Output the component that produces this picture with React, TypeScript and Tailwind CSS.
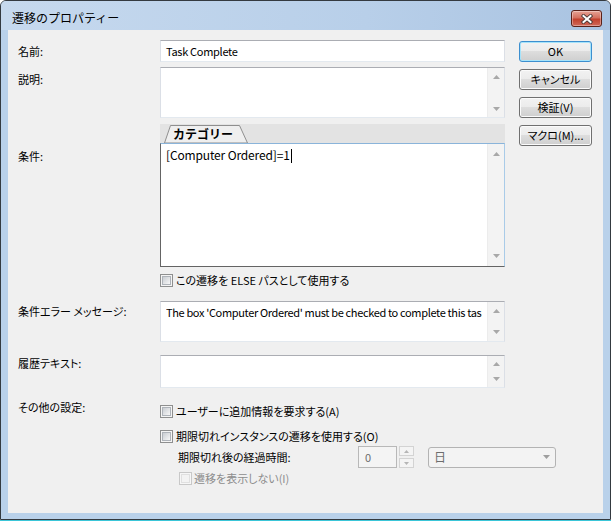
import React from 'react'

const Arrow = ({ down = false, color = '#a8a8a8', w = 7 }: { down?: boolean; color?: string; w?: number }) => (
  <svg width={w} height={Math.ceil(w / 2)} viewBox={`0 0 ${w} ${Math.ceil(w / 2)}`}>
    <polygon
      points={down ? `0,0 ${w},0 ${w / 2},${Math.ceil(w / 2)}` : `0,${Math.ceil(w / 2)} ${w},${Math.ceil(w / 2)} ${w / 2},0`}
      fill={color}
    />
  </svg>
)

// 無効状態のスクロールバー
const ScrollTrack = ({ btn }: { btn: string }) => (
  <div className="flex w-[17px] shrink-0 flex-col justify-between self-stretch border-l border-[#ececec] bg-[#f3f3f3]">
    <div className={`flex items-center justify-center ${btn}`}>
      <Arrow />
    </div>
    <div className={`flex items-center justify-center ${btn}`}>
      <Arrow down />
    </div>
  </div>
)

const TextArea = ({ height, btn, children }: { height: string; btn: string; children?: React.ReactNode }) => (
  <div
    className={`flex w-[345px] border border-t-[#abadb3] border-r-[#dbdfe6] border-b-[#e3e9ef] border-l-[#dbdfe6] bg-white ${height}`}
  >
    <div className="min-w-0 flex-1 px-[5px] pt-[2px] leading-[16px]">
      <div className="overflow-hidden whitespace-nowrap">{children}</div>
    </div>
    <ScrollTrack btn={btn} />
  </div>
)

const Check = ({ disabled = false }: { disabled?: boolean }) => (
  <span
    className={`flex h-[13px] w-[13px] shrink-0 items-center justify-center border ${
      disabled ? 'border-[#c8c8c8] bg-[#f6f6f6]' : 'border-[#8e8f8f] bg-[#f4f4f4]'
    }`}
  >
    <span
      className={`h-[9px] w-[9px] border ${
        disabled
          ? 'border-[#e0e0e0] bg-[#f3f3f3]'
          : 'border-[#aeb3b9] bg-[linear-gradient(135deg,#c9cdd2,#f7f7f7)]'
      }`}
    />
  </span>
)

const Btn = ({ children, primary = false }: { children: React.ReactNode; primary?: boolean }) => (
  <button
    className={`flex h-[21px] w-[73px] items-center justify-center rounded-[3px] border bg-[linear-gradient(to_bottom,#f2f2f2_0%,#ebebeb_50%,#dddddd_50%,#cfcfcf_100%)] leading-none ${
      primary
        ? 'border-[#3c8fcf] shadow-[inset_0_0_0_1px_#a6e3fa]'
        : 'border-[#707070] shadow-[inset_0_0_0_1px_#fbfbfb]'
    }`}
  >
    {children}
  </button>
)

const CloseButton = () => (
  <div className="ml-auto mr-[8px] mt-[9px] flex h-[17px] w-[31px] items-center justify-center rounded-[3px] border border-[#5a2119] bg-[linear-gradient(to_bottom,#e6a395_0%,#d4705f_45%,#c2412d_55%,#d0695a_100%)] shadow-[inset_0_0_0_1px_rgba(255,255,255,0.35)]">
    <svg width="12" height="10" viewBox="0 0 12 10">
      <path d="M2.5 2 L9.5 8 M9.5 2 L2.5 8" stroke="#4a3a38" strokeWidth="3.8" strokeLinecap="square" />
      <path d="M2.5 2 L9.5 8 M9.5 2 L2.5 8" stroke="#ffffff" strokeWidth="2" strokeLinecap="square" />
    </svg>
  </div>
)

const Label = ({ children, pad }: { children: React.ReactNode; pad: string }) => (
  <div className={`w-[152px] shrink-0 pl-[10px] leading-[16px] ${pad}`}>{children}</div>
)

export default function App() {
  return (
    <div className="h-[522px] w-[612px] overflow-hidden bg-white font-['Noto_Sans_CJK_JP',sans-serif] text-[11px] text-black [font-feature-settings:'palt']">
      <div className="flex h-[520px] w-[611px] flex-col rounded-t-[6px] border border-[#343a40] bg-[#b9d1ea]">
        {/* タイトルバー */}
        <div className="flex h-[29px] shrink-0 items-start rounded-t-[5px] bg-[linear-gradient(to_right,#c6d9ee,#b8cfe9_60%,#a9c3e1)]">
          <span className="ml-[11px] mt-[9px] text-[12px] leading-[16px] [font-feature-settings:normal]">
            遷移のプロパティー
          </span>
          <CloseButton />
        </div>

        <div className="mx-[7px] mb-[6px] flex flex-1 bg-[#f0f0f0]">
          {/* フォーム */}
          <div className="flex w-[497px] flex-col pt-[10px]">
            <div className="flex h-[22px] items-center">
              <Label pad="">名前:</Label>
              <div className="flex h-[22px] w-[345px] items-center border border-t-[#abadb3] border-r-[#dbdfe6] border-b-[#e3e9ef] border-l-[#dbdfe6] bg-white px-[5px] tracking-[-0.3px]">
                Task Complete
              </div>
            </div>

            <div className="mt-[5px] flex">
              <Label pad="pt-[4px]">説明:</Label>
              <TextArea height="h-[51px]" btn="h-[17px]" />
            </div>

            <div className="mt-[6px] flex">
              <Label pad="pt-[24px]">条件:</Label>
              <div className="flex w-[345px] flex-col">
                <div className="flex h-[19px] bg-[#e3e3e3]">
                  <div className="relative ml-[4px] h-[19px] w-[84px]">
                    <svg className="absolute inset-0" width="84" height="19" viewBox="0 0 84 19">
                      <polygon points="0.5,19 6.5,1.5 75.5,1.5 83.5,19" fill="#efefef" stroke="#8f8f8f" />
                    </svg>
                    <span className="relative block pl-[9px] pt-[2px] text-[12px] font-bold leading-[16px] [font-feature-settings:normal]">
                      カテゴリー
                    </span>
                  </div>
                </div>
                <div className="flex h-[124px] border border-t-[#8ab4da] border-r-[#a9cbe8] border-b-[#646464] border-l-[#646464] bg-white">
                  <div className="flex-1 px-[5px] pt-[3px] text-[12px] leading-[16px] tracking-[-0.15px]">
                    [Computer Ordered]=1
                    <span className="ml-[1px] inline-block h-[14px] w-[1px] bg-black align-[-3px]" />
                  </div>
                  <ScrollTrack btn="h-[20px]" />
                </div>
              </div>
            </div>

            <div className="mt-[5px] flex h-[16px] items-center gap-[3px] pl-[152px]">
              <Check />
              <span className="leading-[16px]">この遷移を ELSE パスとして使用する</span>
            </div>

            <div className="mt-[13px] flex">
              <Label pad="pt-[2px]">条件エラー メッセージ:</Label>
              <TextArea height="h-[41px]" btn="h-[18px]">
                <span className="tracking-[-0.35px]">
                  The box 'Computer Ordered' must be checked to complete this task
                </span>
              </TextArea>
            </div>

            <div className="mt-[13px] flex">
              <Label pad="">履歴テキスト:</Label>
              <TextArea height="h-[33px]" btn="h-[16px]" />
            </div>

            <div className="mt-[11px] flex">
              <Label pad="">その他の設定:</Label>
              <div className="flex flex-col">
                <div className="mt-[4px] flex h-[16px] items-center gap-[3px]">
                  <Check />
                  <span className="leading-[16px]">ユーザーに追加情報を要求する(A)</span>
                </div>
                <div className="mt-[9px] flex h-[16px] items-center gap-[3px]">
                  <Check />
                  <span className="leading-[16px]">期限切れインスタンスの遷移を使用する(O)</span>
                </div>
                <div className="mt-[2px] flex h-[22px] items-center">
                  <span className="w-[198px] shrink-0 pl-[18px] leading-[16px]">期限切れ後の経過時間:</span>
                  <div className="flex h-[22px] w-[39px] items-center border border-[#b8b8b8] bg-[#f4f4f4] pl-[6px] text-[#6d6d6d]">
                    0
                  </div>
                  <div className="ml-[2px] flex h-[22px] w-[15px] flex-col justify-between">
                    <div className="flex h-[10px] items-center justify-center border border-[#d3d3d3] bg-[#f4f4f4]">
                      <Arrow w={5} color="#b5b5b5" />
                    </div>
                    <div className="flex h-[10px] items-center justify-center border border-[#d3d3d3] bg-[#f4f4f4]">
                      <Arrow w={5} down color="#b5b5b5" />
                    </div>
                  </div>
                  <div className="ml-[14px] flex h-[21px] w-[128px] items-center justify-between rounded-[3px] border border-[#b3b3b3] bg-[#f3f3f3] pl-[5px] pr-[5px] text-[#6d6d6d]">
                    <span className="text-[12px] leading-[16px]">日</span>
                    <Arrow down color="#9e9e9e" />
                  </div>
                </div>
                <div className="mt-[2px] flex h-[16px] items-center gap-[2px] pl-[19px]">
                  <Check disabled />
                  <span className="leading-[16px] text-[#8d8d8d]">遷移を表示しない(I)</span>
                </div>
              </div>
            </div>
          </div>

          {/* ボタン */}
          <div className="ml-[14px] flex w-[73px] flex-col gap-[7px] pt-[11px]">
            <Btn primary>OK</Btn>
            <Btn>キャンセル</Btn>
            <Btn>検証(V)</Btn>
            <Btn>マクロ(M)...</Btn>
          </div>
        </div>
      </div>
      <div className="h-[1px] w-[611px] bg-[#3bc6d8]" />
    </div>
  )
}
